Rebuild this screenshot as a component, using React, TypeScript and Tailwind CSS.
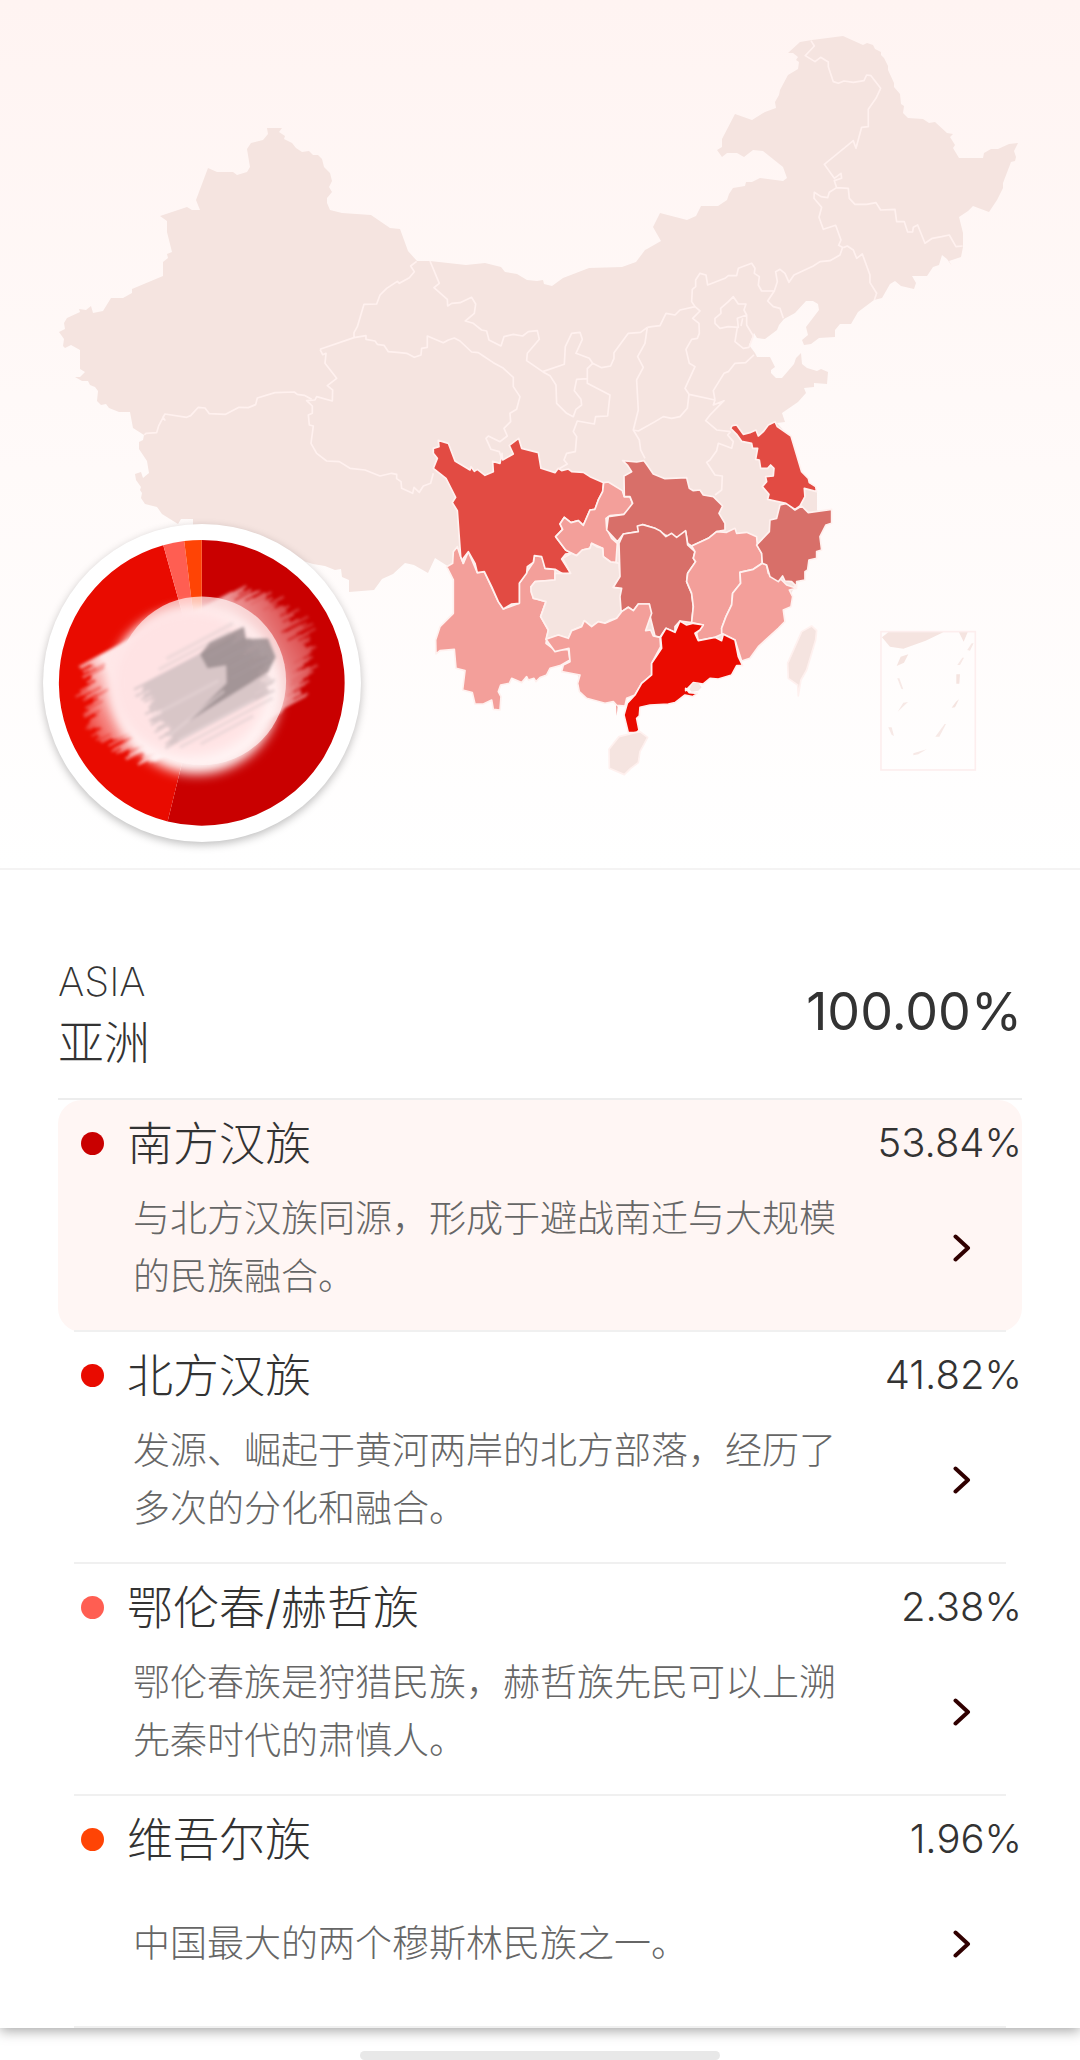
const groups = [
  {
    name: "南方汉族",
    percent: 53.84,
    color: "#c90000",
    description: "与北方汉族同源，形成于避战南迁与大规模的民族融合。",
  },
  {
    name: "北方汉族",
    percent: 41.82,
    color: "#e90b00",
    description: "发源、崛起于黄河两岸的北方部落，经历了多次的分化和融合。",
  },
  {
    name: "鄂伦春/赫哲族",
    percent: 2.38,
    color: "#ff5e52",
    description: "鄂伦春族是狩猎民族，赫哲族先民可以上溯先秦时代的肃慎人。",
  },
  {
    name: "维吾尔族",
    percent: 1.96,
    color: "#ff4405",
    description: "中国最大的两个穆斯林民族之一。",
  },
];

const mainland =
  "M267 128 282 128 279 132 285 136 284 139 292 143 296 148 302 152 309 151 313 155 318 155 322 159 324 167 330 173 332 181 329 187 332 192 327 198 327 203 330 210 342 213 371 215 390 228 400 229 404 240 408 251 417 261 430 261 466 265 485 263 501 267 505 272 517 274 527 280 537 281 543 280 544 284 552 286 563 278 589 268 622 267 636 262 645 250 647 249 661 241 653 227 660 213 687 220 696 216 701 206 718 206 727 200 729 194 733 188 745 186 746 182 752 182 760 178 783 181 787 178 783 167 763 151 753 150 744 157 737 153 727 153 722 157 717 150 722 147 722 139 735 114 752 120 765 112 776 108 775 102 779 95 780 90 788 75 798 69 799 62 796 60 798 57 793 53 788 53 800 42 812 40 843 36 863 45 867 43 873 45 875 49 881 52 881 55 884 58 888 66 888 70 894 83 894 87 900 94 901 104 904 106 903 113 908 118 923 119 929 123 935 122 947 133 953 134 950 137 955 145 953 148 959 158 983 158 984 153 991 149 998 149 1009 144 1018 143 1014 151 1016 157 1015 161 1011 162 1003 183 1003 188 997 200 989 212 973 206 968 211 959 217 963 233 963 247 961 257 949 261 952 266 947 259 942 255 939 265 933 267 927 276 912 276 916 283 914 289 901 286 895 281 890 284 882 298 874 300 858 312 851 324 840 324 835 330 835 337 819 338 811 344 804 345 802 340 808 335 806 327 819 310 818 304 813 301 806 301 795 313 784 319 779 325 777 330 765 339 757 338 754 333 749 345 755 353 757 357 770 357 775 367 771 370 771 373 776 378 782 378 794 364 796 358 801 353 802 364 807 368 817 371 821 369 828 372 827 384 814 383 814 387 804 388 806 393 798 402 782 413 785 422 777 423 792 440 802 475 817 492 817 510 825 520 812 550 795 585 780 620 755 645 735 662 700 683 640 695 615 700 585 690 570 660 540 665 470 690 460 660 455 620 455 570 446 565 435 558 428 573 414 565 405 563 393 574 382 579 374 590 349 592 349 580 342 577 341 569 335 570 325 566 313 564 300 560 240 530 193 527 193 519 181 519 178 524 162 514 157 507 145 504 141 498 142 493 140 490 141 487 136 480 135 474 141 472 143 478 149 473 147 461 139 449 139 442 143 440 144 435 133 428 130 412 119 412 109 408 106 404 101 405 97 401 98 391 95 387 90 385 88 381 82 381 75 377 80 377 85 372 80 369 80 350 71 345 65 348 63 346 64 339 59 332 65 329 64 323 67 318 80 312 79 309 86 310 91 306 93 313 103 311 111 298 123 298 132 293 132 289 163 276 163 262 168 258 167 254 172 252 167 232 167 221 160 216 187 207 192 210 200 210 196 200 208 168 217 172 233 172 237 175 247 172 250 167 247 149 251 143 263 140 268 134Z";

// Each region of the map is traced on its own grid, three units to one map unit.
const borders = [
  {
    grid: "translate(40 110) scale(0.3333)",
    lines:
      "M313 975 318 970 350 968 356 948 375 912 440 922 452 917 475 892 495 894 508 911 557 913 597 892 625 893 647 884 652 864 705 848 763 846 772 853 793 856 815 868M375 912 369 922 376 932",
  },
  {
    grid: "translate(300 240) scale(0.3333)",
    lines:
      "M60 328 162 293 198 287 198 298 225 303 232 313 252 316 265 335 300 338 320 340 343 352 363 345 365 325 382 322 382 288 430 308 445 300 463 294 480 303 515 336 535 338 550 348 580 368 608 383 640 412 640 440 660 470 650 508 630 520 632 545 612 565 622 588 600 605 565 588 558 595 573 628 598 635 605 655M60 328 68 344 78 340 75 370 110 415 82 437 98 450 97 483 50 470 45 480 20 482 37 498 37 520 25 525 28 555 40 558 33 610 50 640 80 663 118 665 150 685 195 690 240 708 275 700 290 703 290 716 303 725 305 745 338 760 342 742 358 757 370 738 392 730 400 700M350 64 332 78 343 95 328 113 298 130 292 124 260 145 240 165 230 192 192 193 172 260 162 278 162 293M390 63 418 130 402 143 442 178 443 198 455 190 480 188 515 172 527 192 523 220 496 243 520 250 545 270 560 273 567 300 603 318 612 290 640 283 668 288 685 275 712 272 718 298 682 340 680 362 728 395 793 373 796 320 815 280 840 277 847 298 828 340 868 355 878 370 905 383 932 378 942 355 942 338 985 280 1022 277 1042 262M728 395 750 407 768 435 770 490 800 520 820 530 828 508 845 495 843 478 823 452 830 418 862 416 862 386 878 370M862 416 862 430 930 465 923 528 887 530 883 552 832 543 820 575 830 590 826 635 800 640 792 660 802 672 775 688M1042 262 1035 310 1013 350 1030 382 1010 420 1015 510 1000 570 1018 600 1022 630 1035 655",
  },
  {
    grid: "translate(600 230) scale(0.3333)",
    lines:
      "M142 292 155 290 180 287 198 250 225 255 240 240 285 230 275 215 277 178 287 170 287 150 300 130 318 135 323 165 375 145 385 137 410 137 415 115 455 100 465 115 463 130 478 140 475 165 485 183 523 183 532 155 527 125 540 118 555 130 567 157 582 135 640 108 660 95 690 92 720 75 728 52M523 183 503 213 520 230 540 235 550 265M285 230 300 243 278 265 297 280 298 310 292 325 275 328 258 358 268 400 285 410 255 475 267 493 262 535 240 560 215 565 190 560 165 575 115 603 100 600M267 493 345 510 340 525 372 512 330 555 317 572 350 600 392 605M462 375 437 398 405 400 385 425 372 430 340 482 345 510M400 200 415 222 438 222 432 240 440 255 412 265 415 292 385 290 360 295 345 280 345 265 363 250 362 235 385 215ZM440 255 440 285 460 318 447 352 430 355 405 335 412 292M428 265 423 288M392 605 383 615 400 635 395 655 355 640 350 662 330 690 320 697 345 735 367 738 365 780 345 795",
  },
  {
    grid: "translate(640 20) scale(0.3333)",
    lines:
      "M513 62 523 78 496 107 525 125 542 112 565 126 565 140 580 185 595 190 612 183 640 187 672 182 680 165 693 167 722 205 708 235 685 268 685 320 665 322 648 385 640 362 553 433 583 475 603 460 605 475 583 482 590 503 568 517 563 533 543 530 523 517 522 535 545 562 537 592 550 628 587 616 603 660 596 676 610 683M590 503 625 505 628 535 645 553 680 553 708 548 722 570 765 568 770 605 793 605 803 636 818 636 820 622 833 615 855 670 877 655 905 650 928 645 948 680 968 678M610 683 622 678 640 690 650 715 667 702 690 765 690 788 710 820 703 840",
  },
];

const provinces = [
  {
    name: "云南",
    fill: "#f39f9a",
    d: "M145 455 172 518 193 515 235 605 250 627 298 610 298 550 340 487 343 467 370 470 375 505 405 508 405 540 345 545 333 560 340 595 378 605 362 650 385 690 378 730 405 750 445 748 450 780 420 797 390 805 380 825 360 833 348 845 342 835 325 840 320 830 305 848 275 835 268 850 242 855 235 875 243 890 240 930 220 928 215 900 190 912 165 912 157 878 128 870 135 812 108 805 103 748 60 752 48 762 47 720 60 680 100 640 100 540 80 500 98 490 100 455 112 440 122 470 130 490Z",
  },
  {
    name: "四川",
    fill: "#e24b43",
    d: "M55 121 85 130 105 183 150 210 153 200 163 214 172 208 195 226 220 215 218 184 240 190 246 160 248 180 280 162 268 136 296 115 305 145 355 158 363 205 405 218 415 205 425 212 445 207 455 215 490 217 510 230 551 248 548 275 535 300 525 328 510 330 490 376 475 362 453 368 433 352 420 372 428 388 407 410 437 450 455 460 437 462 425 477 452 520 430 523 405 508 375 505 365 470 343 467 340 487 322 500 320 520 298 550 298 610 275 612 250 627 235 605 215 560 193 515 172 518 165 490 145 455 130 475 130 490 122 470 112 332 97 308 107 292 78 235 40 205 52 175 40 160 40 145 57 140Z",
  },
  {
    name: "重庆",
    fill: "#f39f9a",
    d: "M551 248 565 246 607 272 613 290 630 290 638 310 632 325 612 343 570 347 558 355 560 385 575 415 592 430 588 488 572 486 550 470 548 445 515 430 510 445 487 450 470 467 455 460 437 450 407 410 428 388 420 372 433 352 453 368 475 362 490 376 510 330 525 328 535 300 548 275Z",
  },
  {
    name: "贵州",
    fill: "#f5e4e0",
    d: "M515 430 530 440 548 445 550 470 572 486 588 488 597 490 600 530 580 562 605 565 605 635 590 655 570 660 555 670 535 665 515 680 493 662 485 680 455 692 445 715 415 705 378 718 385 690 362 650 378 605 350 597 340 595 333 575 333 560 345 545 405 540 405 520 452 520 428 475 455 460 470 467 487 450 510 445Z",
  },
  {
    name: "湖北",
    fill: "#d86f69",
    d: "M608 182 650 186 672 182 685 200 700 222 735 236 800 233 808 265 820 272 840 270 850 285 880 290 908 318 897 340 915 370 915 390 890 395 865 415 815 438 803 430 797 395 770 415 735 405 705 385 668 374 655 395 610 402 592 425 560 390 565 350 612 343 638 310 630 290 613 290 612 228 635 215 622 195Z",
  },
  {
    name: "湖南",
    fill: "#d86f69",
    d: "M597 430 610 402 655 395 652 378 668 374 705 385 720 392 738 410 755 400 770 412 797 392 803 435 825 455 820 475 827 485 803 520 800 545 815 580 820 620 815 668 780 663 765 680 765 697 738 685 720 712 705 708 688 640 688 612 655 612 640 632 625 622 605 635 603 630 600 590 605 565 580 562 600 530Z",
  },
  {
    name: "广西",
    fill: "#f39f9a",
    d: "M605 635 625 622 640 632 655 612 688 612 695 640 677 692 692 690 700 708 720 712 722 740 695 790 695 825 665 850 645 885 620 895 615 918 590 916 580 905 555 910 500 895 478 875 473 850 480 825 425 815 430 795 450 785 447 745 405 755 378 718 415 705 445 715 455 692 485 680 493 662 515 680 535 665 555 670 590 655Z",
  },
  {
    name: "江西",
    fill: "#f39f9a",
    d: "M815 438 865 415 890 395 920 397 945 385 950 400 980 397 1010 410 1012 435 1025 460 1027 490 1000 508 960 517 962 550 938 580 935 615 918 650 905 685 912 700 885 712 835 722 830 700 850 675 815 668 820 620 815 580 800 545 803 520 827 485 820 475 825 455Z",
  },
  {
    name: "福建",
    fill: "#f39f9a",
    d: "M1027 490 1040 495 1045 520 1085 540 1100 555 1130 565 1108 570 1118 590 1113 620 1090 630 1095 665 1075 685 1015 740 990 775 965 783 945 720 905 700 905 685 918 650 935 615 938 580 962 550 960 517 1000 508Z",
  },
  {
    name: "浙江",
    fill: "#d86f69",
    d: "M1080 315 1100 310 1125 330 1145 318 1165 338 1235 328 1235 370 1218 375 1200 410 1205 450 1190 455 1190 475 1167 480 1163 510 1155 515 1155 540 1130 545 1130 560 1115 545 1095 543 1088 528 1075 545 1050 530 1040 495 1027 490 1025 460 1010 435 1048 395 1050 360 1070 355Z",
  },
  {
    name: "江苏",
    fill: "#e24b43",
    d: "M932 85 937 77 950 75 970 103 990 98 1008 90 1015 108 1030 95 1045 75 1065 65 1072 80 1113 108 1145 215 1165 235 1168 248 1187 260 1190 275 1153 265 1155 290 1140 318 1125 328 1098 310 1043 298 1047 283 1027 260 1040 245 1037 230 1060 228 1062 205 1052 195 1043 205 1022 205 1018 180 1007 178 1013 145 998 145 995 130 965 124 950 103Z",
  },
  {
    name: "广东",
    fill: "#ea0b00",
    d: "M780 663 800 675 820 670 850 675 840 690 825 700 835 722 885 712 905 722 910 703 945 720 955 770 968 797 950 797 935 825 895 837 870 835 850 852 820 848 797 872 797 865 808 878 832 880 818 890 795 885 765 908 745 912 690 915 660 922 658 948 650 955 657 990 650 998 625 998 612 945 622 910 645 885 665 850 695 825 695 790 725 745 722 712 738 685 765 697Z",
  },
  {
    name: "台湾",
    fill: "#f5e4e0",
    d: "M1175 678 1190 692 1187 720 1160 810 1143 840 1135 888 1133 855 1105 835 1103 790 1145 695Z",
  },
  {
    name: "海南",
    fill: "#f5e4e0",
    d: "M597 1010 645 998 660 995 683 1012 660 1055 655 1088 632 1105 613 1124 568 1105 567 1048Z",
  },
];

function ChinaMap() {
  return (
    <svg viewBox="0 0 1080 868" className="block w-full" role="img" aria-label="中国地图">
      <path d={mainland} fill="#f5e4e0" />
      {borders.map((b) => (
        <g key={b.grid} transform={b.grid}>
          <path d={b.lines} fill="none" stroke="#fff1ef" strokeWidth="5" strokeLinejoin="round" />
        </g>
      ))}
      <g transform="translate(420 400) scale(0.3333)">
        {provinces.map((p) => (
          <path key={p.name} d={p.d} fill={p.fill} stroke="#fff1ef" strokeWidth="5" strokeLinejoin="round" />
        ))}
        <path d="M808 868 818 850 835 848 845 862 835 872 815 875Z" fill="#f5e4e0" />
        <path d="M588 916 593 920 590 947Z" fill="#f39f9a" />
      </g>
      <g transform="translate(780 590) scale(0.3333)" fill="#f5e4e0">
        <rect x="303" y="125" width="283" height="415" fill="none" stroke="#fdeeee" strokeWidth="5" />
        <path d="M325 127 490 127 437 152 370 176 330 170 306 142ZM537 127 563 127 551 155ZM362 200 385 193 372 218 350 228ZM529 253 540 253 538 281 529 281ZM528 335 537 328 525 352 515 353Z" />
        <path d="M494 402 498 402 478 440 466 440ZM325 412 335 412 342 438 335 434ZM400 490 440 478 415 493 400 496ZM370 338 384 336 353 365ZM547 203 552 203 540 225 532 225ZM575 160 581 160 570 182 562 180ZM352 265 358 265 370 298 364 296Z" opacity="0.8" />
      </g>
    </svg>
  );
}

function slicePath(start: number, end: number) {
  const point = (value: number) => {
    const angle = (value / 100) * Math.PI * 2;
    return `${160 + 144 * Math.sin(angle)} ${160 - 144 * Math.cos(angle)}`;
  };
  return `M160 160L${point(start)}A144 144 0 ${end - start > 50 ? 1 : 0} 1 ${point(end)}Z`;
}

// Uneven lengths for the bristles, the same on every render.
function jitter(n: number) {
  const v = Math.sin(n * 12.9898) * 43758.5453;
  return v - Math.floor(v);
}

const leftBristles = Array.from({ length: 130 }, (_, i) => {
  const y = 88 + (i / 130) * 120;
  const x = 34 + ((y - 142) / 60) ** 2 * 30 + jitter(i) * 40;
  return `M${x} ${y}H150`;
}).join("");

const rightBristles = Array.from({ length: 120 }, (_, i) => {
  const y = 94 + (i / 120) * 130;
  const x = 288 - ((y - 158) / 64) ** 2 * 38 - jitter(i + 200) * 34;
  return `M170 ${y}H${x}`;
}).join("");

const grayBristles = Array.from({ length: 60 }, (_, i) => {
  const y = 134 + (i / 60) * 68;
  return `M${94 + jitter(i + 400) * 20} ${y}H${210 + jitter(i + 500) * 24 - Math.abs(y - 170) / 3}`;
}).join("");

function Donut() {
  const slices = groups.map((g, i) => {
    const start = groups.slice(0, i).reduce((sum, item) => sum + item.percent, 0);
    return { color: g.color, d: slicePath(start, start + g.percent) };
  });

  return (
    <svg
      viewBox="0 0 320 320"
      className="w-full rounded-full bg-white shadow-[0_3px_8px_rgba(0,0,0,0.25)]"
      role="img"
      aria-label="祖源成分占比"
    >
      <defs>
        <filter id="soft" x="-30%" y="-30%" width="160%" height="160%">
          <feGaussianBlur stdDeviation="6" />
        </filter>
        <filter id="dab" x="-20%" y="-20%" width="140%" height="140%">
          <feGaussianBlur stdDeviation="1.6" />
        </filter>
        <linearGradient id="fade-left" gradientUnits="userSpaceOnUse" x1="30" x2="84" y1="0" y2="0">
          <stop offset="0" stopColor="#ffe2e3" stopOpacity="0.15" />
          <stop offset="1" stopColor="#ffe8e8" stopOpacity="1" />
        </linearGradient>
        <linearGradient id="fade-right" gradientUnits="userSpaceOnUse" x1="220" x2="290" y1="0" y2="0">
          <stop offset="0" stopColor="#ffe2e3" stopOpacity="0.7" />
          <stop offset="1" stopColor="#ffd0d0" stopOpacity="0.25" />
        </linearGradient>
      </defs>
      {slices.map((s) => (
        <path key={s.color} d={s.d} fill={s.color} />
      ))}
      {/* paint smeared over the hub, bristles running up to the right */}
      <g transform="rotate(-28 160 160)" fill="none" filter="url(#dab)">
        <path d={leftBristles} stroke="url(#fade-left)" strokeWidth="2" />
        <path d={rightBristles} stroke="url(#fade-right)" strokeWidth="2" />
      </g>
      <ellipse cx="155" cy="168" rx="84" ry="84" fill="#fff6f6" filter="url(#soft)" />
      <circle cx="160" cy="158" r="85" fill="#fff4f4" opacity="0.7" />
      <ellipse cx="148" cy="160" rx="80" ry="74" fill="#ffe3e4" filter="url(#soft)" />
      <g transform="rotate(-28 160 160)" fill="none" filter="url(#dab)">
        <path d={grayBristles} stroke="#cbbcbe" strokeWidth="2" opacity="0.75" />
        <path d="M128 128H210M140 122H216M110 207H216M130 214H190" stroke="#d9cbcd" strokeWidth="3" opacity="0.5" />
        <path d="M172 134 186 128 224 130 220 142 240 152 238 172 224 182 130 188 182 172 190 156 172 150Z" fill="#96888b" opacity="0.8" />
        <path d="M178 140H218M186 150H228M192 160H232M188 170H230" stroke="#a99b9e" strokeWidth="2" opacity="0.6" />
        <path d="M104 192 176 178M100 166H176M112 200H200" stroke="#ead8da" strokeWidth="2" opacity="0.7" />
      </g>
    </svg>
  );
}

function Chevron() {
  return (
    <svg viewBox="0 0 18 28" className="h-[28px] w-[18px]" fill="none" aria-hidden="true">
      <path d="M2.5 2.5 15 14 2.5 25.5" stroke="#300000" strokeWidth="4" strokeLinecap="round" strokeLinejoin="round" />
    </svg>
  );
}

export default function App() {
  return (
    <main className="bg-white font-['Inter','Noto_Sans_CJK_SC',sans-serif] font-light text-[#333333]">
      <div className="overflow-hidden shadow-[0_3px_12px_rgba(0,0,0,0.35)]">
        <section className="relative border-b-2 border-[#f4f3f3] bg-linear-to-b from-[#fff4f2] to-white">
          <ChinaMap />
          <div className="absolute bottom-[3%] left-[4%] w-[29.4%]">
            <Donut />
          </div>
        </section>

        <section className="px-[58px] pt-[82px]">
          <header className="flex items-center justify-between border-b-2 border-[#ededed] pb-[26px]">
            <h1>
              <span className="block text-[40px] leading-[60px] font-extralight">ASIA</span>
              <span className="block text-[46px] leading-[60px]">亚洲</span>
            </h1>
            <p className="text-[52px] leading-[60px] font-normal">100.00%</p>
          </header>

          <ul>
            {groups.map((g, i) => (
              <li key={g.name} className={i === 0 ? "rounded-3xl bg-[#fff6f4]" : ""}>
                <a href={`#group-${i + 1}`} className="block">
                  <div className="flex h-[86px] items-center">
                    <span className="mx-[23px] size-[23px] rounded-full" style={{ backgroundColor: g.color }} />
                    <h2 className="text-[46px]">{g.name}</h2>
                    <span className="ml-auto text-[40px]">{g.percent.toFixed(2)}%</span>
                  </div>
                  <div className="flex min-h-[124px] items-center justify-between pl-[75px] pr-[51px]">
                    <p className="max-w-[720px] flex-1 text-[37px] leading-[58px] text-[#666666]">
                      {g.description}
                    </p>
                    <Chevron />
                  </div>
                  <div className="mx-4 h-[22px] border-b-2 border-[#f0f0f0]" />
                </a>
              </li>
            ))}
          </ul>
        </section>
      </div>
      <div className="mx-auto mt-[23px] h-[9px] w-1/3 rounded-full bg-[#e8e8e8]" />
    </main>
  );
}
